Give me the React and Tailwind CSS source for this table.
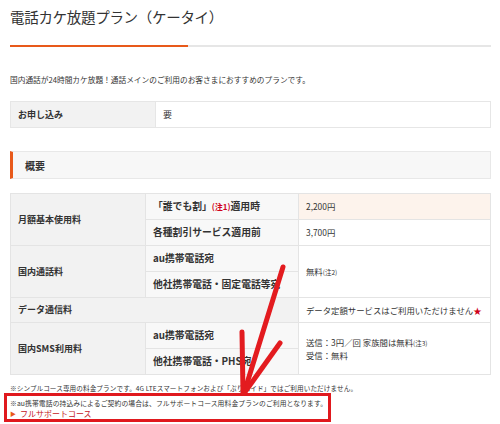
export default function App() {
  const font = { fontFamily: '"Noto Sans CJK JP", "Noto Sans", sans-serif' };
  const th = "bg-[#f2f2f2] border border-[#e4e4e4] pl-[7px] text-left font-bold text-[9px] text-[#333] whitespace-nowrap";
  const td2 = "bg-[#f8f8f8] border border-[#e4e4e4] pl-[7px] text-left text-[9.8px] text-[#333] font-bold h-[26px] whitespace-nowrap";
  const td3 = "bg-white border border-[#e4e4e4] pl-[7px] text-left text-[8.4px] text-[#333] whitespace-nowrap";
  return (
    <div className="relative w-[500px] h-[424px] bg-white overflow-hidden" style={font}>
      <div className="px-[10px]">
        <h1 className="pt-[7px] h-[27px] text-[14.5px] leading-[20px] text-[#333] font-normal tracking-[-0.3px]">
          電話カケ放題プラン（ケータイ）
        </h1>
        <div className="mt-[18px] flex h-[2px] w-[481px]">
          <div className="w-[178px] bg-[#e8591a]" />
          <div className="flex-1 bg-[#e6e6e6]" />
        </div>
        <p className="mt-[27px] text-[7.7px] leading-[12px] text-[#333]">
          国内通話が24時間カケ放題！通話メインのご利用のお客さまにおすすめのプランです。
        </p>
        <table className="mt-[15px] w-[481px] border-collapse">
          <tbody>
            <tr className="h-[26px]">
              <th className="bg-[#f2f2f2] border border-[#e6e6e6] pl-[7px] text-left font-bold text-[9px] text-[#333] w-[145px]">お申し込み</th>
              <td className="border border-[#e6e6e6] pl-[7px] text-[9px] text-[#333]">要</td>
            </tr>
          </tbody>
        </table>
        <div className="mt-[23px] h-[28px] w-[481px] bg-[#f7f7f7] border border-[#e8e8e8] border-l-[3px] border-l-[#e8591a] flex items-center pl-[12px]">
          <span className="text-[10px] font-bold text-[#333]">概要</span>
        </div>
        <table className="mt-[14px] w-[481px] border-collapse table-fixed">
          <colgroup>
            <col className="w-[135px]" />
            <col className="w-[153px]" />
            <col />
          </colgroup>
          <tbody>
            <tr className="h-[26px]">
              <th rowSpan={2} className={th}>月額基本使用料</th>
              <td className={td2}>
                「誰でも割」<span className="text-[#d0021b] text-[8px]">(注1)</span>適用時
              </td>
              <td className="bg-[#fdf3ec] border border-[#e4e4e4] pl-[7px] text-left text-[8.4px] text-[#333]">2,200円</td>
            </tr>
            <tr className="h-[26px]">
              <td className={td2}>各種割引サービス適用前</td>
              <td className={td3}>3,700円</td>
            </tr>
            <tr className="h-[26px]">
              <th rowSpan={2} className={th}>国内通話料</th>
              <td className={td2}>au携帯電話宛</td>
              <td rowSpan={2} className={td3}>
                無料<span className="text-[6.5px]">(注2)</span>
              </td>
            </tr>
            <tr className="h-[26px]">
              <td className={td2}>他社携帯電話・固定電話等宛</td>
            </tr>
            <tr className="h-[25px]">
              <th colSpan={2} className={th}>データ通信料</th>
              <td className={td3}>
                データ定額サービスはご利用いただけません<span className="text-[#d0021b]">★</span>
              </td>
            </tr>
            <tr className="h-[26px]">
              <th rowSpan={2} className={th}>国内SMS利用料</th>
              <td className={td2}>au携帯電話宛</td>
              <td rowSpan={2} className={td3 + " leading-[12px]"}>
                送信：3円／回 家族間は無料<span className="text-[6.5px]">(注3)</span>
                <br />
                受信：無料
              </td>
            </tr>
            <tr className="h-[26px]">
              <td className={td2}>他社携帯電話・PHS宛</td>
            </tr>
          </tbody>
        </table>
        <p className="mt-[7px] text-[6.6px] leading-[12px] text-[#333] tracking-[0.1px]">
          ※シンプルコース専用の料金プランです。4G LTEスマートフォンおよび「ぷりペイド」ではご利用いただけません。
        </p>
        <p className="mt-[4px] text-[6.8px] leading-[10px] text-[#333] tracking-[0.1px]">
          ※au携帯電話の持込みによるご契約の場合は、フルサポートコース用料金プランのご利用となります。
        </p>
        <p className="flex items-center text-[8px] leading-[11px] text-[#c4161c]">
          <span className="text-[#e8591a] text-[6px] mr-[4px]">▶</span>
          フルサポートコース
        </p>
      </div>
      <div className="absolute left-[4px] top-[393px] w-[327px] h-[29px] border-[3px] border-[#e0191e]" />
      <svg className="absolute left-0 top-0" width="500" height="424" viewBox="0 0 500 424">
        <g stroke="#e31b1f" strokeWidth="5" strokeLinecap="round" fill="none">
          <path d="M283 267 L244 393" />
          <path d="M242 332 L243 393" />
          <path d="M280 343 L245 392" />
        </g>
      </svg>
    </div>
  );
}
